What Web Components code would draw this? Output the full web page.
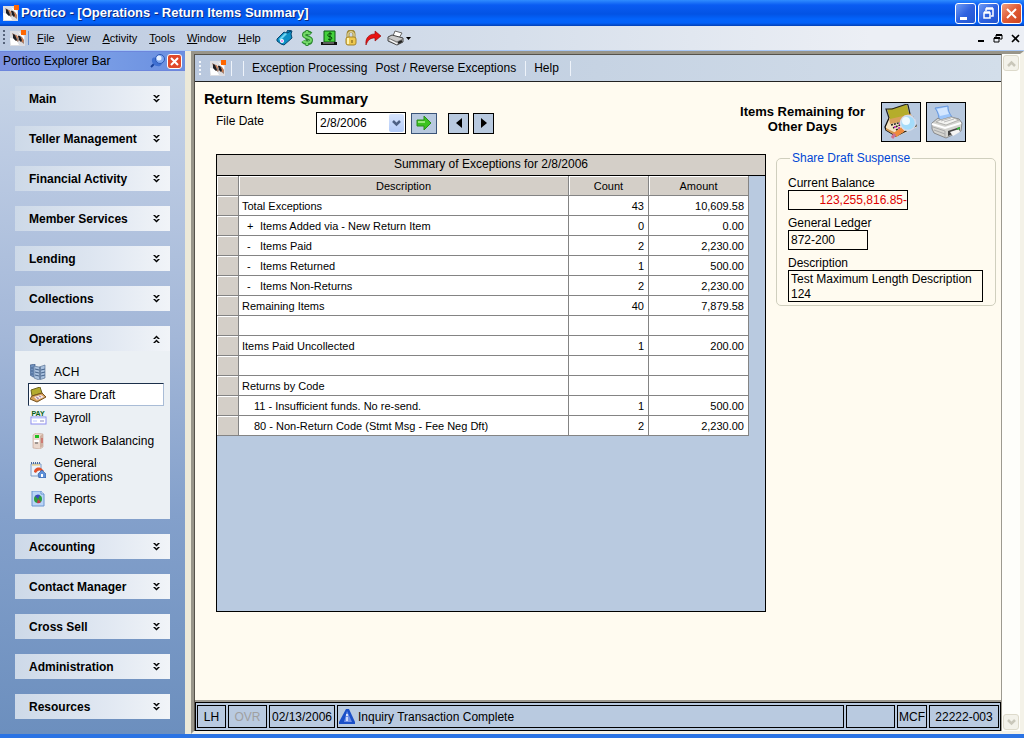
<!DOCTYPE html>
<html lang="en">
<head>
<meta charset="utf-8">
<title>Portico - [Operations - Return Items Summary]</title>
<style>
html, body { margin: 0; height: 100%; }
body { font: 12px/14px "Liberation Sans", Arial, sans-serif; color: #000; }
</style>
</head>
<body>
<portico-app></portico-app>

<script>
const LOGO = `<svg width="16" height="16" viewBox="0 0 16 16" aria-hidden="true"><rect y="1" width="15" height="15" fill="#dcdde2"/><path d="M0 8l6 1 3 6H1zM8 2l6 4v4z" fill="#fff"/><path d="M2 3l4 2 3 5-1 2-4-3z" fill="#a08070"/><path d="M8 5l4 2 2 3v4l-4-3z" fill="#a08070"/><path d="M3 4l2 1 2 5-1 1-3-3zM8 6l2 0 2 4-1 2-2-2z" fill="#1c1c22"/><path d="M6 5l2 3M12 8l1 4" stroke="#e07a40"/><rect x="11" width="5" height="5" fill="#f60"/></svg>`;

const ICONS = {
  tag: `<svg width="17" height="16" viewBox="0 0 17 16"><path d="M1 9l7-7 2 1 2-3 4 1-1 3 1 4-8 7-3-1-4-3z" fill="#0e8fc4" stroke="#07466f"/><path d="M3 9l6-6 2 1-7 7z" fill="#6fd6f2"/><circle cx="6" cy="11" r="2" fill="#fff"/><circle cx="6" cy="11" r="1" fill="#e07be8"/><path d="M11 3l4-2" stroke="#063b66"/></svg>`,
  dollar: `<svg width="12" height="16" viewBox="0 0 12 16"><path d="M10 4C8 2 3 2 3 5c0 3 7 2 7 5 0 4-6 4-8 1" fill="none" stroke="#2c8a30" stroke-width="4"/><path d="M6 0v16" stroke="#2c8a30" stroke-width="3"/><path d="M9 4C7 2 3 3 3 5c0 3 7 2 7 5 0 3-6 3-8 1M6 1v2m0 10v2" fill="none" stroke="#74da68" stroke-width="2"/></svg>`,
  bill: `<svg width="16" height="16" viewBox="0 0 16 16"><path d="M3 1h11v11H3z" fill="#45d13c" stroke="#0b5a12"/><path d="M0 12h16v3H0z" fill="#111"/><path d="M2 13h11" stroke="#aaa"/><path d="M11 4C8 3 6 4 7 6c1 1 3 0 4 2 0 2-3 2-4 1M9 2v9" fill="none" stroke="#064d0a"/></svg>`,
  lock: `<svg width="12" height="16" viewBox="0 0 12 16"><path d="M3 8V4c0-4 6-4 6 0v4" fill="none" stroke="#a08a38" stroke-width="3"/><path d="M3 8V4c0-3 6-3 6 0v4" fill="none" stroke="#f8ecb4"/><rect x="1" y="7" width="10" height="8" rx="2" fill="#eec84f" stroke="#a48428"/><path d="M3 8v6" stroke="#fff3b0" stroke-width="2"/><path d="M7 10v3" stroke="#6c5210"/></svg>`,
  redo: `<svg width="16" height="16" viewBox="0 0 16 16"><path d="M10 1l6 5-6 5V8C5 8 3 10 1 15c-1-7 3-11 9-11z" fill="#e81313" stroke="#8d0505" stroke-width=".6"/></svg>`,
  print: `<svg width="17" height="16" viewBox="0 0 17 16"><path d="M6 6l2-5 7 2-3 5z" fill="#fff" stroke="#666"/><path d="M1 7l4-2 11 3v4l-6 3-9-4z" fill="#c9c9c9" stroke="#444"/><path d="M1 8l9 4 6-3" fill="none" stroke="#777"/><path d="M3 10l7 4" stroke="#fff"/><path d="M11 13l4-2" stroke="#222" stroke-width="2"/></svg>`,
  ach: `<svg width="16" height="16" viewBox="0 0 16 16"><path d="M0 1l5-1v12l-2 1-3-2z" fill="#6f90bd" stroke="#3a567f" stroke-width=".6"/><path d="M4 2l5 1 6-2v13l-6 2-5-2z" fill="#a9c1de" stroke="#4c6689" stroke-width=".6"/><path d="M10 3v12" stroke="#304a70"/><path d="M5 5l4 1m2 0l4-1M5 8l4 1m2 0l4-1M5 11l4 1m2 0l4-1M1 4h2M1 7h2M1 10h2" stroke="#46648c"/></svg>`,
  draft: `<svg width="17" height="16" viewBox="0 0 17 16"><path d="M1 3l9-3 2 6-10 3z" fill="#b3aa2d" stroke="#6e6420"/><path d="M2 9l10-3 4 4-9 5-7-3z" fill="#d9a25e" stroke="#755220"/><path d="M4 10l7-2 3 2-7 3z" fill="#f3e9ee"/><path d="M6 10l2 1m1-2l2 1m-4 2l2-1" stroke="#a37d9a"/></svg>`,
  pay: `<svg width="17" height="16" viewBox="0 0 17 16"><text x="8" y="6" text-anchor="middle" font-family="Liberation Sans,sans-serif" font-size="7" font-weight="700" fill="#075f16">PAY</text><rect x="1" y="7" width="15" height="7" fill="#fff" stroke="#8e8ef0"/><path d="M2 8h13M3 11h4" stroke="#b9c6ff"/><path d="M10 11h4" stroke="#8a8ac0"/></svg>`,
  network: `<svg width="16" height="16" viewBox="0 0 16 16"><path d="M3 2l3-2 7 1v13l-3 2-7-1z" fill="#ead8cd" stroke="#c0a090" stroke-width=".6"/><path d="M10 3v12l3-2V1z" fill="#cfb0a0"/><rect x="5" y="2" width="4" height="3" fill="#1fbf1f"/><path d="M4 7h5v2H4z" fill="#fff"/><path d="M5 10h3" stroke="#555"/><path d="M12 5v5" stroke="#c44"/></svg>`,
  general: `<svg width="16" height="16" viewBox="0 0 16 16"><path d="M1 2h10v12H1z" fill="#e9f2fd" stroke="#7c9cc6"/><path d="M1 1h10" stroke="#4a6a9c" stroke-width="2" stroke-dasharray="1 1"/><path d="M2 3h8" stroke="#f0c860"/><path d="M4 10c0-4 5-6 8-3l2 2h-3c-2-1-4 0-5 2z" fill="#e0502a"/><path d="M8 12l4-4 4 4v4H9z" fill="#5d90d8" stroke="#2c5598" stroke-width=".6"/><path d="M11 12h2v3h-2z" fill="#fff"/></svg>`,
  report: `<svg width="16" height="16" viewBox="0 0 16 16"><path d="M2 0h9l3 3v12H2z" fill="#b9d5f8" stroke="#6b94cf"/><path d="M11 0v3h3" fill="#eaf3ff" stroke="#6b94cf"/><circle cx="8" cy="8" r="4" fill="#2c9d3c"/><path d="M8 8L5 5a4 4 0 0 1 5-1z" fill="#3c49c4"/><path d="M8 8l3 3a4 4 0 0 1-4 1z" fill="#c33b4d"/></svg>`,
  pin: `<svg width="15" height="14" viewBox="0 0 15 14"><path d="M1 13l4-4" stroke="#17409a" stroke-width="2"/><path d="M2 5c2-3 4-1 7 1s4 4 1 6C6 13 1 10 2 5z" fill="#3f70d2"/><circle cx="10" cy="5" r="4.5" fill="#7fa8f2" stroke="#2a56b4"/><circle cx="9" cy="4" r="2.500" fill="#e6f0ff"/></svg>`,
  go: `<svg width="16" height="16" viewBox="0 0 16 16"><path d="M1 5h7V1l7 7-7 7v-4H1z" fill="#3cc321" stroke="#2a8c1c"/><path d="M2 6h7v2H2z" fill="#96e87a"/></svg>`,
  prev: `<svg width="6" height="10" viewBox="0 0 6 10"><path d="M6 0v10L0 5z"/></svg>`,
  next: `<svg width="6" height="10" viewBox="0 0 6 10"><path d="M0 0v10l6-5z"/></svg>`,
  lookup: `<svg width="36" height="36" viewBox="0 0 36 36"><path d="M5 14l19-3 7 3 3 9-21 10L2 24z" fill="#f4e4c4"/><path d="M6 14l-4 9 1 3 10 6 20-10-3-9" fill="none" stroke="#111" stroke-width="1.300"/><path d="M6 13l20-5 4 5-3 3-20 4z" fill="#d9a05c"/><path d="M4 5l7-1L24 0l2 10-6 2-13 3z" fill="#b5ad2b"/><path d="M6 14L3 5h6l15-5 1 1 2 9" fill="none" stroke="#222" stroke-width="1.200"/><path d="M3 24l10 5 6-4 2 3-8 4-10-6z" fill="#cf9550"/><path d="M8 21l11-3m-9 6l9-4m-6 6l4-2" stroke="#222" stroke-width="1.500" stroke-dasharray="2 1"/><path d="M11 23h2m3-3h3m-4 4h2" stroke="#d02cc8" stroke-width="1.500"/><path d="M20 25l-8 6" stroke="#ef8a3c" stroke-width="5"/><path d="M12 30l-3 4" stroke="#d07090" stroke-width="3"/><circle cx="25" cy="19" r="7.500" fill="#a4dcfa" stroke="#d3dcec" stroke-width="1.500"/><circle cx="23" cy="17" r="4" fill="#eefaff"/></svg>`,
  bigprint: `<svg width="36" height="36" viewBox="0 0 36 36"><path d="M7 4l13-2c0 4 1 7 4 11l-13 4C11 12 10 8 7 4z" fill="#9cc5fa" stroke="#6a9ae0"/><path d="M9 5l10-2c0 3 1 5 2 7l-9 2z" fill="#d3e6fe"/><path d="M4 19l6-5 3 2 10-3 8 2 3 4-1 8-15 7-12-5-2-4z" fill="#d4d4d0" stroke="#777" stroke-width=".8"/><path d="M8 18l4-2 11-3 8 3-13 5z" fill="#f4f4f1" stroke="#a5a5a2" stroke-width=".8"/><path d="M4 20l13 4 16-5" fill="none" stroke="#fff" stroke-width="2"/><path d="M5 23l12 4v6M6 26l11 4" fill="none" stroke="#aaa"/><path d="M20 27l12-4v4l-12 5z" fill="#444"/><path d="M22 28l9-3 1 3-7 4z" fill="#f5f5f5"/><path d="M29 24l3-1v2l-3 1z" fill="#35b53a"/><path d="M13 17l10-3m-7 4l10-3" stroke="#bbb"/></svg>`,
  alert: `<svg width="16" height="16" viewBox="0 0 16 16"><path d="M7 0h3l6 13v2H0v-2z" fill="#1b50c8"/><path d="M8 2l5 11H5z" fill="#6f90e8"/><circle cx="8" cy="6" r="1" fill="#fff"/><path d="M8 8v4" stroke="#e9efff" stroke-width="1.500"/></svg>`,
  chevDown: `<svg width="7" height="8" viewBox="0 0 7 8"><path d="M0 0h2l1.500 1.500L5 0h2L3.500 3.500zM0 4h2l1.500 1.500L5 4h2L3.500 7.500z"/></svg>`,
  chevUp: `<svg width="7" height="8" viewBox="0 0 7 8"><path d="M0 4h2l1.500-1.500L5 4h2L3.500 .5zM0 8h2l1.500-1.500L5 8h2L3.500 4.500z"/></svg>`,
  chevron: `<svg width="9" height="7" viewBox="0 0 9 7"><path d="M1 1l3.500 3.500L8 1" fill="none" stroke="currentColor" stroke-width="2.500"/></svg>`,
  chevronUp: `<svg width="9" height="7" viewBox="0 0 9 7"><path d="M1 6l3.500-3.500L8 6" fill="none" stroke="currentColor" stroke-width="2.500"/></svg>`,
  caret: `<svg width="5" height="3" viewBox="0 0 5 3"><path d="M0 0h5L2.500 3z"/></svg>`
};

const BASE = `<style>
:host, *, *::before { box-sizing: border-box; }
button, input, textarea, select { font: inherit; color: inherit; margin: 0; }
button { padding: 0; border: 0; background: none; display: flex; align-items: center; justify-content: center; }
svg { display: block; flex: none; }
</style>`;

function define(name, html, setup) {
  customElements.define(name, class extends HTMLElement {
    connectedCallback() {
      if (this.shadowRoot) return;
      const template = document.createElement('template');
      template.innerHTML = BASE + html;
      this.attachShadow({ mode: 'open' }).append(template.content.cloneNode(true));
      if (setup) setup(this, this.shadowRoot);
    }
  });
}

define('title-bar', `<style>
:host { display: flex; align-items: center; height: 26px; padding: 0 2px 0 3px; gap: 2px;
  background: linear-gradient(#2f8cff 0, #0a5cf2 5px, #0353e4 14px, #0363fb 19px, #0361f8 23px, #0340b5 26px); }
h1 { flex: 1; margin: 0; font-size: 13px; line-height: 16px; color: #fff; text-shadow: 1px 1px #0a2a80; }
button { width: 21px; height: 21px; border: 1px solid #fff; border-radius: 3px; background: linear-gradient(135deg, #6f9cf5, #2f62e0 50%, #2256d0); }
.close { background: linear-gradient(135deg, #f0a080, #e05a35 50%, #cc4420); }
</style>
${LOGO}<h1><slot></slot></h1>
<button aria-label="Minimize"><svg width="15" height="15"><path d="M2 11h7v3H2z" fill="#fff"/></svg></button>
<button aria-label="Restore"><svg width="15" height="15"><path d="M5 5V3h7v7h-2M5 2h7M3 7h6v5H3zM3 6h6" fill="none" stroke="#fff" stroke-width="1.500"/></svg></button>
<button class="close" aria-label="Close"><svg width="15" height="15"><path d="M3 3l9 9m0-9l-9 9" stroke="#fff" stroke-width="2"/></svg></button>`);

define('menu-bar', `<style>
:host { display: flex; align-items: center; height: 24px; padding: 0 4px 0 3px; font-size: 11px;
  background: linear-gradient(90deg, #bccae0, #d6dfeb 50%, #eceff5 85%); }
.grip { width: 2px; height: 16px; margin-right: 5px; background: repeating-linear-gradient(#56637a 0 2px, transparent 2px 4px); }
.sep { width: 1px; height: 14px; margin: 0 8px 0 2px; background: #6d8fc8; }
nav { display: flex; gap: 12px; margin-right: 15px; }
.tools { display: flex; align-items: center; flex: 1; gap: 6px; }
.tools button:last-child { gap: 2px; }
.tools button { min-width: 16px; }
.mdi { display: flex; gap: 8px; }
</style>
<span class="grip"></span>${LOGO}<span class="sep"></span>
<nav><button><span><u>F</u>ile</span></button><button><span><u>V</u>iew</span></button><button><span><u>A</u>ctivity</span></button><button><span><u>T</u>ools</span></button><button><span><u>W</u>indow</span></button><button><span><u>H</u>elp</span></button></nav>
<div class="tools"><button aria-label="Tag">${ICONS.tag}</button><button aria-label="Cash">${ICONS.dollar}</button><button aria-label="Teller">${ICONS.bill}</button><button aria-label="Lock">${ICONS.lock}</button><button aria-label="Go to">${ICONS.redo}</button><button aria-label="Print">${ICONS.print}${ICONS.caret}</button></div>
<div class="mdi"><button aria-label="Minimize document"><svg width="8" height="9"><path d="M1 6h6v2H1z"/></svg></button><button aria-label="Restore document"><svg width="10" height="9"><path d="M3 3V1h6v4H7M1 4h5v4H1z" fill="none" stroke="#000"/><path d="M3 1h6M1 4h6" stroke="#000" stroke-width="2"/></svg></button><button aria-label="Close document"><svg width="9" height="9"><path d="M1 1l7 7m0-7L1 8" stroke="#000" stroke-width="1.600"/></svg></button></div>`);

define('nav-group', `<style>
:host { display: block; background: #ebf0f4; }
button { width: 100%; height: 25px; padding: 0 10px 0 14px; justify-content: space-between; font-weight: 700;
  background: linear-gradient(90deg, #cdd9e8, #e1e8f2 60%, #f1f4f8); }
.items { display: none; flex-direction: column; padding: 9px 6px 9px 13px; }
:host([open]) .items { display: flex; }
.up, :host([open]) .down { display: none; }
:host([open]) .up { display: block; }
</style>
<button><span></span><span class="down">${ICONS.chevDown}</span><span class="up">${ICONS.chevUp}</span></button>
<div class="items"><slot></slot></div>`, (host, root) => {
  const button = root.querySelector('button');
  button.firstElementChild.textContent = host.getAttribute('label');
  button.setAttribute('aria-expanded', host.hasAttribute('open'));
  button.addEventListener('click', () => button.setAttribute('aria-expanded', host.toggleAttribute('open')));
});

define('nav-item', `<style>
:host { display: block; }
a { display: flex; align-items: center; gap: 7px; min-height: 23px; padding: 0 1px; border: 1px solid transparent; color: inherit; text-decoration: none; }
.icon { width: 17px; }
.text { flex: 1; }
:host([selected]) a { background: #fff; border-color: #1b2f4a #a9bcd6 #a9bcd6 #1b2f4a; }
:host([tall]) a { min-height: 35px; }
</style>
<a href="#"><span class="icon"></span><span class="text"><slot></slot></span></a>`, (host, root) => {
  root.querySelector('.icon').innerHTML = ICONS[host.getAttribute('icon')];
});

define('explorer-bar', `<style>
:host { display: flex; flex-direction: column; width: 185px; flex: none;
  background: linear-gradient(#cad7e7, #bccbe3 15%, #a3b7d8 42%, #83a0cb 68%, #6c8fbe); }
header { display: flex; align-items: center; gap: 2px; height: 20px; padding: 0 3px; background: linear-gradient(90deg, #7b90e0, #7a9ee6 50%, #6a8fe0); border: 1px solid #6d86dc; border-width: 1px 0; }
h2 { flex: 1; margin: 0; font-size: 12px; font-weight: 400; }
.close { width: 15px; height: 15px; border: 1px solid #fff; border-radius: 3px; background: #e0492a; }
nav { display: flex; flex-direction: column; gap: 15px; padding: 15px; }
</style>
<header><h2>Portico Explorer Bar</h2><button aria-label="Pin">${ICONS.pin}</button><button class="close" aria-label="Close"><svg width="9" height="9"><path d="M1 1l7 7m0-7L1 8" stroke="#fff" stroke-width="2"/></svg></button></header>
<nav>
<nav-group label="Main"></nav-group>
<nav-group label="Teller Management"></nav-group>
<nav-group label="Financial Activity"></nav-group>
<nav-group label="Member Services"></nav-group>
<nav-group label="Lending"></nav-group>
<nav-group label="Collections"></nav-group>
<nav-group label="Operations" open>
<nav-item icon="ach">ACH</nav-item>
<nav-item icon="draft" selected>Share Draft</nav-item>
<nav-item icon="pay">Payroll</nav-item>
<nav-item icon="network">Network Balancing</nav-item>
<nav-item icon="general" tall>General<br>Operations</nav-item>
<nav-item icon="report">Reports</nav-item>
</nav-group>
<nav-group label="Accounting"></nav-group>
<nav-group label="Contact Manager"></nav-group>
<nav-group label="Cross Sell"></nav-group>
<nav-group label="Administration"></nav-group>
<nav-group label="Resources"></nav-group>
</nav>`);

define('tool-strip', `<style>
:host { display: flex; align-items: center; flex: none; height: 27px; padding: 0 3px; background: linear-gradient(90deg, #b9c8de, #c6d3e3 50%, #d3deea); border-bottom: 1px solid #222; }
.grip { width: 2px; height: 15px; margin: 0 9px 0 1px; background: repeating-linear-gradient(#f4f7fb 0 2px, transparent 2px 4px); }
.sep { width: 1px; height: 15px; margin-left: 9px; background: #eef3fa; }
.sep.lead { margin-left: 5px; }
.sep.menu { margin-left: 11px; }
button { margin-left: 8px; }
</style>
<span class="grip"></span>${LOGO}<span class="sep lead"></span><span class="sep menu"></span>
<button>Exception Processing</button><button>Post / Reverse Exceptions</button><span class="sep"></span><button>Help</button><span class="sep menu"></span>`);

define('file-date', `<style>
:host { display: flex; align-items: center; height: 22px; }
label { width: 100px; padding-bottom: 4px; }
.pick { position: relative; width: 90px; height: 22px; }
select { appearance: none; width: 100%; height: 100%; padding: 0 3px; border: 1px solid #000; border-radius: 0; background: #fff; }
.arrow { position: absolute; right: 2px; top: 2px; width: 15px; height: 18px; display: grid; place-items: center; background: linear-gradient(#d7e4fd, #b3cbf8); border-radius: 2px; color: #4d6185; pointer-events: none; }
button { width: 21px; height: 21px; margin-left: 4px; border: 1px solid #000; background: #b8c9df; }
.go { width: 26px; margin: 0 7px 0 5px; border-color: #3b5478; }
</style>
<label for="date">File Date</label>
<span class="pick"><select id="date"><option>2/8/2006</option></select><span class="arrow">${ICONS.chevron}</span></span>
<button class="go" aria-label="Go">${ICONS.go}</button><button aria-label="Previous day">${ICONS.prev}</button><button aria-label="Next day">${ICONS.next}</button>`);

define('exception-grid', `<style>
:host { display: block; border: 1px solid #000; background: #b9cae0; font-size: 11px; }
h3 { margin: 0; height: 21px; border-bottom: 1px solid #000; background: #d4cfc8; font-size: 12px; font-weight: 400; line-height: 18px; text-align: center; }
table { width: calc(100% - 16px); border-collapse: separate; border-spacing: 0; table-layout: fixed; line-height: 14px; }
td, th { height: 20px; padding: 0 3px; border: solid #848484; border-width: 0 1px 1px 0; background: #fff; font-weight: 400; white-space: pre; text-align: left; }
th { background: #d4cfc8; box-shadow: inset 1px 1px #fff; text-align: center; }
.stub { width: 22px; } .count { width: 80px; } .amount { width: 100px; }
.n { padding-right: 4px; text-align: right; }
.sub { padding-left: 8px; } .sub span { display: inline-block; width: 13px; }
.code { padding-left: 15px; }
</style>
<h3>Summary of Exceptions for 2/8/2006</h3>
<table><colgroup><col class="stub"><col><col class="count"><col class="amount"></colgroup>
<thead><tr><th></th><th scope="col">Description</th><th scope="col">Count</th><th scope="col">Amount</th></tr></thead><tbody></tbody></table>`, (host, root) => {
  const rows = [
    ['Total Exceptions', '43', '10,609.58'],
    ['Items Added via - New Return Item', '0', '0.00', 'sub', '+'],
    ['Items Paid', '2', '2,230.00', 'sub', '-'],
    ['Items Returned', '1', '500.00', 'sub', '-'],
    ['Items Non-Returns', '2', '2,230.00', 'sub', '-'],
    ['Remaining Items', '40', '7,879.58'],
    ['', '', ''],
    ['Items Paid Uncollected', '1', '200.00'],
    ['', '', ''],
    ['Returns by Code', '', ''],
    ['11 - Insufficient funds. No re-send.', '1', '500.00', 'code'],
    ['80 - Non-Return Code (Stmt Msg - Fee Neg Dft)', '2', '2,230.00', 'code']
  ];
  root.querySelector('tbody').innerHTML = rows.map(([text, count, amount, kind = '', sign]) =>
    `<tr><th></th><td class="${kind}">${sign ? `<span>${sign}</span>` : ''}${text}</td><td class="n">${count}</td><td class="n">${amount}</td></tr>`).join('');
});

define('suspense-panel', `<style>
:host { display: block; }
fieldset { margin: 0; padding: 11px 11px 3px; border: 1px solid #d0cfbe; border-radius: 5px; min-width: 0; }
legend { margin-left: 2px; padding: 0 2px; color: #0046d5; line-height: 14px; }
label { display: block; line-height: 14px; }
input, textarea { display: block; height: 20px; margin-bottom: 6px; padding: 0 2px; border: 1px solid #000; border-radius: 0; background: transparent; outline: 0; }
.balance { width: 120px; padding: 0; text-align: right; color: #d00; }
.ledger { width: 80px; }
textarea { width: 100%; max-width: 195px; height: 32px; margin: 0; padding-top: 1px; line-height: 15px; resize: none; overflow: hidden; }
</style>
<fieldset><legend>Share Draft Suspense</legend>
<label for="balance">Current Balance</label><input id="balance" class="balance" readonly value="123,255,816.85-">
<label for="ledger">General Ledger</label><input id="ledger" class="ledger" readonly value="872-200">
<label for="description">Description</label><textarea id="description" readonly>Test Maximum Length Description
124</textarea></fieldset>`);

define('summary-page', `<style>
:host { display: flex; flex-direction: column; flex: 1; min-height: 0; padding: 7px 5px 88px 21px; background: #fffbf0; }
header { display: flex; justify-content: space-between; height: 62px; }
h2 { margin: 0 0 3px -12px; font-size: 15px; line-height: 20px; }
.other { display: flex; gap: 5px; padding: 13px 30px 0 0; }
.other p { margin: 2px 11px 0 0; font-size: 13px; font-weight: 700; line-height: 15px; text-align: center; }
.other button { width: 40px; height: 40px; border: 1px solid #000; background: #b8c9df; }
.body { display: flex; flex: 1; gap: 10px; min-height: 0; }
exception-grid { flex: 1; margin-top: 3px; }
suspense-panel { width: 220px; }
</style>
<header><div><h2>Return Items Summary</h2><file-date></file-date></div>
<div class="other"><p>Items Remaining for<br>Other Days</p><button aria-label="Look up share drafts">${ICONS.lookup}</button><button aria-label="Print">${ICONS.bigprint}</button></div></header>
<div class="body"><exception-grid></exception-grid><suspense-panel></suspense-panel></div>`);

define('status-bar', `<style>
:host { display: flex; flex: none; gap: 2px; height: 29px; padding: 2px 1px; border: 1px solid #000; background: #b9cae0; }
span { display: flex; align-items: center; justify-content: center; border: 1px solid #000; white-space: nowrap; }
.lh { width: 29px; } .ovr { width: 39px; color: #a0a0a0; } .date { width: 66px; }
.msg { flex: 1; justify-content: flex-start; gap: 3px; padding-left: 1px; }
.blank { width: 49px; } .mcf { width: 30px; } .id { width: 70px; }
</style>
<span class="lh">LH</span><span class="ovr">OVR</span><span class="date">02/13/2006</span><span class="msg">${ICONS.alert}Inquiry Transaction Complete</span><span class="blank"></span><span class="mcf">MCF</span><span class="id">22222-003</span>`);

define('scroll-rail', `<style>
:host { display: flex; flex-direction: column; justify-content: space-between; width: 18px; flex: none; padding: 1px; background: #fefefa; }
button { width: 16px; height: 16px; border: 1px solid #dddacb; border-radius: 3px; background: #f3f2ea; color: #c9c7ba; }
</style>
<button disabled aria-label="Scroll up">${ICONS.chevronUp}</button><button disabled aria-label="Scroll down">${ICONS.chevron}</button>`);

define('portico-app', `<style>
:host { display: flex; flex-direction: column; min-height: 100vh; border-bottom: 4px solid #2a73e4; }
main { display: flex; flex: 1; border-top: 1px solid #a9c8f5; }
.split { width: 6px; background: #ece9d8; }
.frame { display: flex; flex: 1; min-width: 0; border: solid; border-width: 3px 4px 3px 3px; border-color: #98958a #f4f2e8 #f4f2e8 #98958a; }
.doc { display: flex; flex-direction: column; flex: 1; min-width: 0; border: solid; border-width: 1px 1px 0 1px; border-color: #55524b #9d9a90; border-left-color: #55524b; }
summary-page { border-bottom: 2px solid #9d9a90; }
</style>
<title-bar>Portico - [Operations - Return Items Summary]</title-bar>
<menu-bar></menu-bar>
<main><explorer-bar></explorer-bar><div class="split"></div>
<div class="frame"><div class="doc"><tool-strip></tool-strip><summary-page></summary-page><status-bar></status-bar></div><scroll-rail></scroll-rail></div></main>`);
</script>
</body>
</html>
